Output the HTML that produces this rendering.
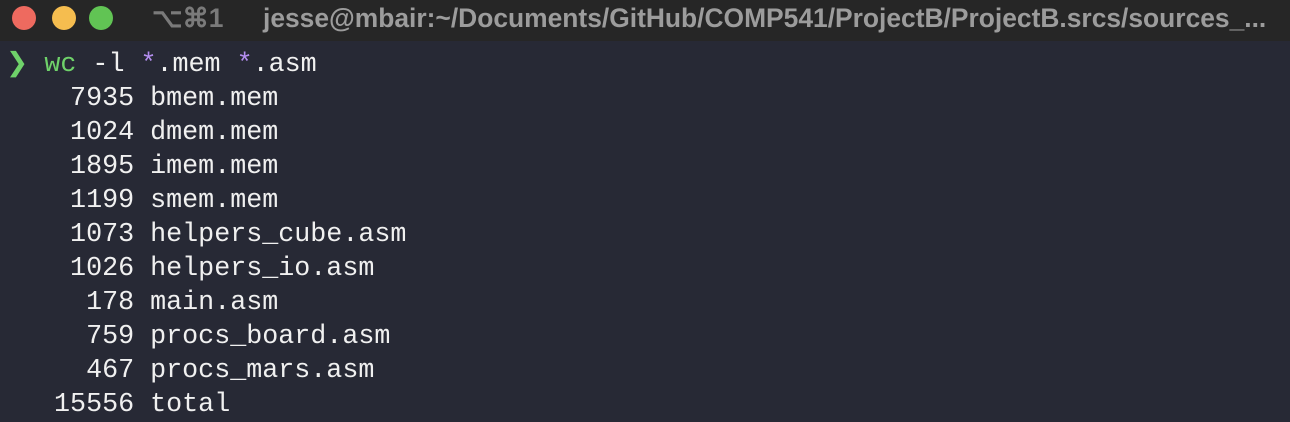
<!DOCTYPE html>
<html><head><style>
html,body{margin:0;padding:0;width:1290px;height:420px;overflow:hidden;background:#272935;}
.bar{position:absolute;left:0;top:0;width:1290px;height:41px;background:#262626;}
.dot{position:absolute;top:6px;width:24px;height:24px;border-radius:50%;}
.t{position:absolute;top:3px;font-family:"Liberation Sans",sans-serif;font-weight:bold;font-size:26.4px;color:#9c9c9c;white-space:nowrap;}
pre{position:absolute;left:6px;top:48px;margin:0;font-family:"Liberation Mono",monospace;font-size:26.7px;line-height:34px;color:#f0f0f0;}
.g{color:#6fd26a}.p{color:#b48ef0}
</style></head><body>
<div class="bar">
<div class="dot" style="left:12px;background:#ee6a5f"></div>
<div class="dot" style="left:52px;background:#f5bd4f"></div>
<div class="dot" style="left:89px;background:#61c454"></div>
<div class="t" style="left:152px;color:#7a7a7a">⌥⌘1</div>
<div class="t" style="left:263px">jesse@mbair:~/Documents/GitHub/COMP541/ProjectB/ProjectB.srcs/sources_...</div>
</div>
<pre><span class="g">❯</span> <span class="g">wc</span> -l <span class="p">*</span>.mem <span class="p">*</span>.asm
    7935 bmem.mem
    1024 dmem.mem
    1895 imem.mem
    1199 smem.mem
    1073 helpers_cube.asm
    1026 helpers_io.asm
     178 main.asm
     759 procs_board.asm
     467 procs_mars.asm
   15556 total</pre>
</body></html>
